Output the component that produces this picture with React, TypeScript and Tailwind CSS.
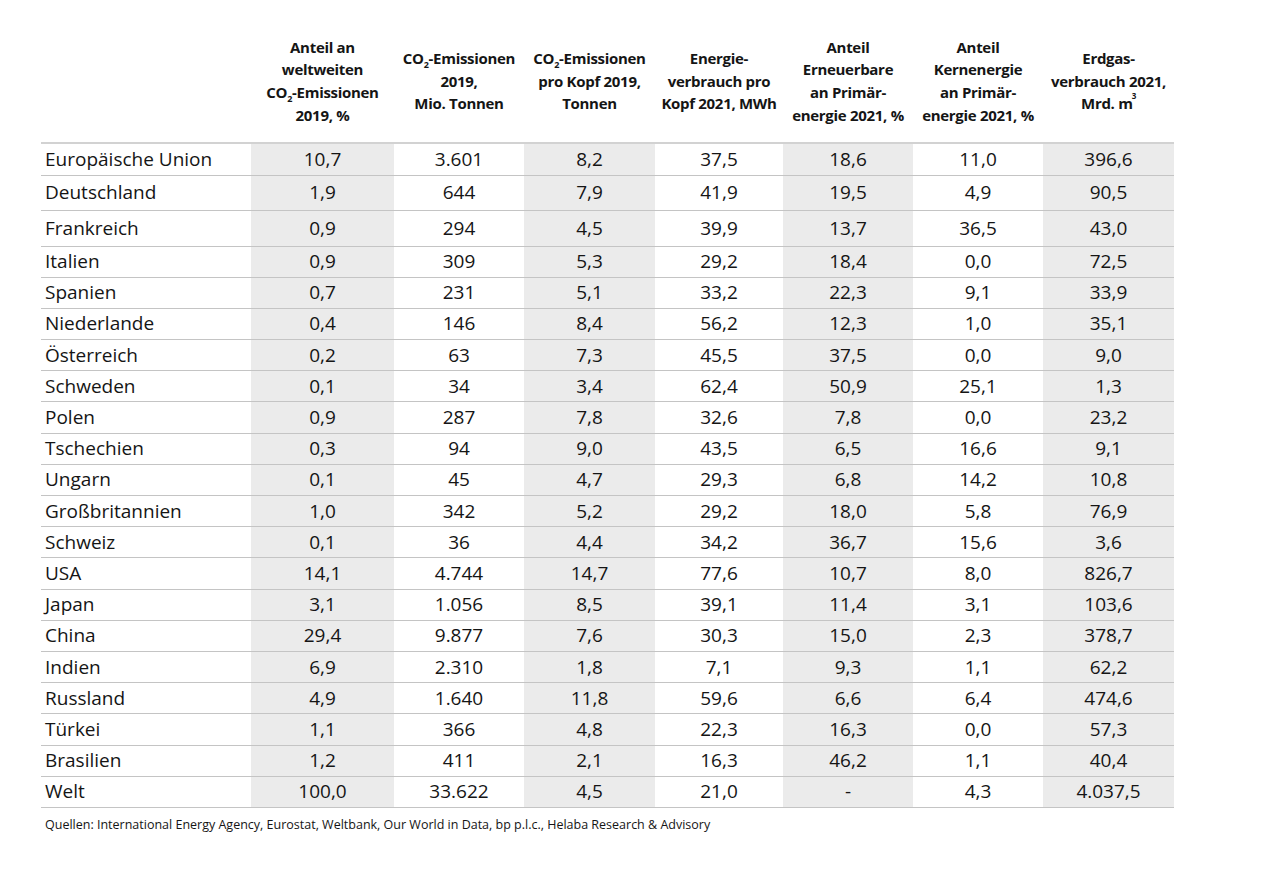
import React from "react";

type Row = [string, string, string, string, string, string, string, string];

const rows: Row[] = [
  ["Europäische Union", "10,7", "3.601", "8,2", "37,5", "18,6", "11,0", "396,6"],
  ["Deutschland", "1,9", "644", "7,9", "41,9", "19,5", "4,9", "90,5"],
  ["Frankreich", "0,9", "294", "4,5", "39,9", "13,7", "36,5", "43,0"],
  ["Italien", "0,9", "309", "5,3", "29,2", "18,4", "0,0", "72,5"],
  ["Spanien", "0,7", "231", "5,1", "33,2", "22,3", "9,1", "33,9"],
  ["Niederlande", "0,4", "146", "8,4", "56,2", "12,3", "1,0", "35,1"],
  ["Österreich", "0,2", "63", "7,3", "45,5", "37,5", "0,0", "9,0"],
  ["Schweden", "0,1", "34", "3,4", "62,4", "50,9", "25,1", "1,3"],
  ["Polen", "0,9", "287", "7,8", "32,6", "7,8", "0,0", "23,2"],
  ["Tschechien", "0,3", "94", "9,0", "43,5", "6,5", "16,6", "9,1"],
  ["Ungarn", "0,1", "45", "4,7", "29,3", "6,8", "14,2", "10,8"],
  ["Großbritannien", "1,0", "342", "5,2", "29,2", "18,0", "5,8", "76,9"],
  ["Schweiz", "0,1", "36", "4,4", "34,2", "36,7", "15,6", "3,6"],
  ["USA", "14,1", "4.744", "14,7", "77,6", "10,7", "8,0", "826,7"],
  ["Japan", "3,1", "1.056", "8,5", "39,1", "11,4", "3,1", "103,6"],
  ["China", "29,4", "9.877", "7,6", "30,3", "15,0", "2,3", "378,7"],
  ["Indien", "6,9", "2.310", "1,8", "7,1", "9,3", "1,1", "62,2"],
  ["Russland", "4,9", "1.640", "11,8", "59,6", "6,6", "6,4", "474,6"],
  ["Türkei", "1,1", "366", "4,8", "22,3", "16,3", "0,0", "57,3"],
  ["Brasilien", "1,2", "411", "2,1", "16,3", "46,2", "1,1", "40,4"],
  ["Welt", "100,0", "33.622", "4,5", "21,0", "-", "4,3", "4.037,5"],
];

// first rows in the source are a bit taller than the rest
const heights = ["h-[32px]", "h-[35px]", "h-[36px]"];

function CO2() {
  return (
    <>
      CO<sub className="text-[9px] align-[-2px]">2</sub>
    </>
  );
}

const headers: React.ReactNode[] = [
  <>Anteil an<br />weltweiten<br /><CO2 />-Emissionen<br />2019, %</>,
  <><CO2 />-Emissionen<br />2019,<br />Mio. Tonnen</>,
  <><CO2 />-Emissionen<br />pro Kopf 2019,<br />Tonnen</>,
  <>Energie-<br />verbrauch pro<br />Kopf 2021, MWh</>,
  <>Anteil<br />Erneuerbare<br />an Primär-<br />energie 2021, %</>,
  <>Anteil<br />Kernenergie<br />an Primär-<br />energie 2021, %</>,
  <>Erdgas-<br />verbrauch 2021,<br />Mrd. m<sup className="-ml-px text-[8px] align-[6px]">3</sup></>,
];

export default function App() {
  return (
    <div className="min-h-screen bg-white pl-[41px] pt-[20px] text-[#151515] [font-family:'Open_Sans',sans-serif]">
      <table className="w-[1133px] table-fixed border-collapse">
        <colgroup>
          <col className="w-[210px]" />
          <col className="w-[143px]" />
          <col className="w-[130px]" />
          <col className="w-[131px]" />
          <col className="w-[128px]" />
          <col className="w-[130px]" />
          <col className="w-[130px]" />
          <col className="w-[131px]" />
        </colgroup>
        <thead>
          <tr className="h-[123px] border-b-2 border-[#d2d2d2]">
            <th />
            {headers.map((h, i) => (
              <th
                key={i}
                className="whitespace-nowrap px-0 text-center align-middle text-[15px] font-bold leading-[22.7px] tracking-[-0.3px]"
              >
                {h}
              </th>
            ))}
          </tr>
        </thead>
        <tbody>
          {rows.map((r, ri) => (
            <tr
              key={r[0]}
              className={`${heights[ri] ?? "h-[31.2px]"} border-b border-[#c4c4c4]`}
            >
              {r.map((c, ci) => (
                <td
                  key={ci}
                  className={
                    ci === 0
                      ? "pl-[4px] text-left text-[19px] font-medium leading-none"
                      : `text-center text-[19px] font-medium leading-none ${ci % 2 === 1 ? "bg-[#ebebeb]" : ""}`
                  }
                >
                  {c}
                </td>
              ))}
            </tr>
          ))}
        </tbody>
      </table>
      <p className="mt-[11px] pl-[4px] text-[12.5px] font-medium leading-none">
        Quellen: International Energy Agency, Eurostat, Weltbank, Our World in Data, bp p.l.c., Helaba Research &amp; Advisory
      </p>
    </div>
  );
}
